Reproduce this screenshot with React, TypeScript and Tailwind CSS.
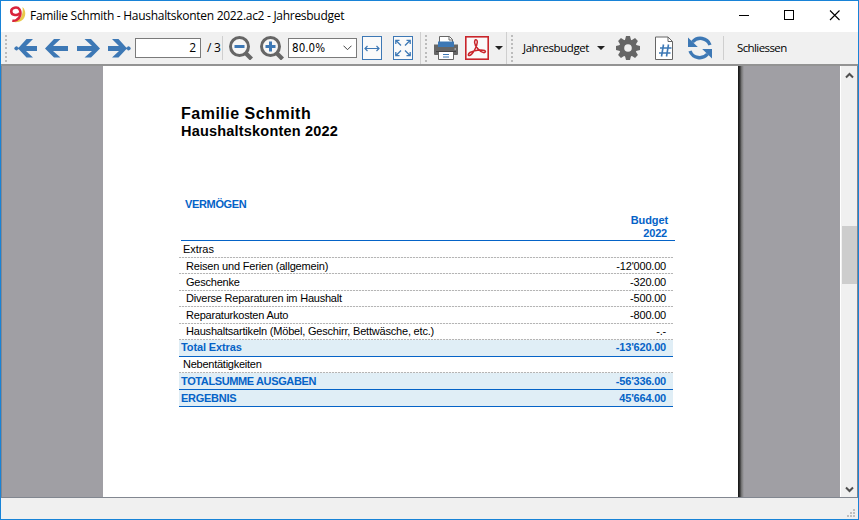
import React from "react";

const BLUE = "#3d78b5";
const GREY = "#666666";

function Grip({ className = "" }: { className?: string }) {
  return (
    <svg className={`shrink-0 ${className}`} width="2" height="27" viewBox="0 0 2 27" shapeRendering="crispEdges">
      {[0, 4, 8, 12, 17, 21, 25].map((y) => (
        <rect key={y} x="0" y={y} width="2" height="2" fill="#bcbcbc" />
      ))}
    </svg>
  );
}

function Caret({ className = "" }: { className?: string }) {
  return (
    <svg className={`shrink-0 ${className}`} width="8" height="4" viewBox="0 0 8 4">
      <path d="M0 0h8L4 4z" fill="#222" />
    </svg>
  );
}

function Arrow({ flip = false, dot = false, className = "" }: { flip?: boolean; dot?: boolean; className?: string }) {
  return (
    <svg className={`h-[20px] w-[24px] shrink-0 ${flip ? "-scale-x-100" : ""} ${className}`} viewBox="0 0 24 20">
      {dot ? (
        <path d="M12.500 1h6.500L12 8h11v5H12l7 6.500h-6.500L4.800 11.300H4a1.900 1.900 0 1 1 0-1.800h.8z" fill={BLUE} />
      ) : (
        <path d="M10 1h6.500L9 8h15v5H9l7.500 6.500H10L1 10.500z" fill={BLUE} />
      )}
    </svg>
  );
}

function Magnifier({ plus = false, className = "" }: { plus?: boolean; className?: string }) {
  return (
    <svg className={`shrink-0 ${className}`} width="24" height="24" viewBox="0 0 24 24">
      <circle cx="10.500" cy="10.500" r="9" fill="#f6f6f6" stroke={GREY} strokeWidth="3" />
      <path d="M16.500 17l6 6" stroke={GREY} strokeWidth="4.200" />
      <path d="M5.500 10.500h10" stroke={BLUE} strokeWidth="3" />
      {plus && <path d="M10.500 5.500v10" stroke={BLUE} strokeWidth="3" />}
    </svg>
  );
}

function FitWidth() {
  return (
    <svg className="ml-[5px] shrink-0" width="20" height="24" viewBox="0 0 20 24">
      <rect x=".5" y=".5" width="19" height="23" fill="#fafafa" stroke={BLUE} />
      <path d="M2.500 12.500h15M5.500 10L3 12.500 5.500 15M14.500 10l2.500 2.500-2.500 2.500" fill="none" stroke={BLUE} strokeWidth="1.200" />
    </svg>
  );
}

function FitPage() {
  return (
    <svg className="ml-[11px] shrink-0" width="20" height="24" viewBox="0 0 20 24">
      <rect x=".5" y=".5" width="19" height="23" fill="#fafafa" stroke={BLUE} />
      <path
        d="M3 4.500l5 5M17 4.500l-5 5M3 19.500l5-5M17 19.500l-5-5M2.800 8V4.300h3.700M13.500 4.300h3.700V8M2.800 16v3.700h3.700M17.200 16v3.700h-3.700"
        fill="none"
        stroke={BLUE}
        strokeWidth="1.300"
      />
    </svg>
  );
}

function Printer() {
  return (
    <svg className="ml-[7px] shrink-0" width="24" height="24" viewBox="0 0 24 24">
      <path d="M5.500 6V.5h10l3 3V6" fill="#fff" stroke={GREY} />
      <path d="M15 .5v3.500h3.500" fill="none" stroke={GREY} />
      <path d="M0 8.500h24V18a1 1 0 0 1-1 1H1a1 1 0 0 1-1-1z" fill={GREY} />
      <path d="M4 5.500h16V11H4z" fill={BLUE} />
      <path d="M4.500 15.500h15v8h-15z" fill="#fff" stroke={GREY} />
      <path d="M2 15.500h20" stroke="#444" />
      <path d="M9 18.500h6M9 21h6" stroke={BLUE} />
      <path d="M20.500 13h1.500" stroke="#ddd" />
    </svg>
  );
}

function Pdf() {
  return (
    <svg className="ml-[7px] shrink-0" width="24" height="24" viewBox="0 0 24 24">
      <rect x=".8" y=".8" width="22.400" height="22.400" fill="#fafafa" stroke="#c9252b" strokeWidth="1.600" />
      <path
        d="M10 4.300c1-1.300 2.500-.2 2.300 2C12 11 7.500 18.500 4.500 19.500c-1.800.3-1.500-1.800.5-3 4-2.300 11.500-3.300 14.500-2 1.800.8.700 2.400-1 2.100C14.500 15.500 9.800 10 9.600 6.500c0-1 .1-1.700.4-2.200z"
        fill="none"
        stroke="#c9252b"
        strokeWidth="1.500"
      />
    </svg>
  );
}

function Gear() {
  return (
    <svg className="ml-[11px] shrink-0" width="24" height="24" viewBox="0 0 24 24">
      {[0, 45, 90, 135].map((a) => (
        <path key={a} d="M10 0h4l1 4v16l-1 4h-4l-1-4V4z" fill={GREY} transform={`rotate(${a} 12 12)`} />
      ))}
      <circle cx="12" cy="12" r="8.800" fill={GREY} />
      <circle cx="12" cy="12" r="3.800" fill="#f0f0f0" />
    </svg>
  );
}

function HashPage() {
  return (
    <svg className="ml-[15px] shrink-0" width="18" height="24" viewBox="0 0 18 24">
      <path d="M.5 1h12.500l4.500 4.500v18H.5z" fill="#fff" stroke={GREY} />
      <path d="M13 1v4.500h4.500" fill="none" stroke={GREY} />
      <path d="M8.500 8.500l-2 12M13.500 8.500l-2 12M5 12h11.500M4 17h11.500" stroke={BLUE} strokeWidth="1.600" />
    </svg>
  );
}

function Refresh() {
  return (
    <svg className="ml-[15px] shrink-0" width="24" height="24" viewBox="0 0 24 24">
      <path d="M22 9A10.300 10.300 0 0 0 4.500 6M2 15a10.300 10.300 0 0 0 17.500 3" fill="none" stroke={BLUE} strokeWidth="3.400" />
      <path d="M0 1.500V11h9.800zM24 22.500V13h-9.800z" fill={BLUE} />
    </svg>
  );
}

function Logo() {
  return (
    <svg className="mt-[5px] shrink-0" width="17" height="17" viewBox="0 0 17 17">
      <path d="M13.500 1c4 3.500 3.600 10.500-.8 13.500-2.700 1.800-6.500 2-9.200 1.200 4.500-.4 7.700-2.200 9-5.700 1-3 1.500-5.500 1-9z" fill="#e9c94b" />
      <path d="M10.500 7C9 10 2.500 10 2.200 5.700 2 1.200 8.500.4 10.500 3.400c2 3.500.8 8.800-3 10.600-1.300.7-2.700.9-4.200.7" fill="none" stroke="#d9233b" strokeWidth="2.500" />
    </svg>
  );
}

function TitleBar() {
  return (
    <header className="flex h-[31px] shrink-0 bg-white pl-[8px]">
      <Logo />
      <span className="ml-[4px] mt-[5px] w-[680px] whitespace-nowrap font-['Open_Sans','Noto_Sans',sans-serif] text-[12px] leading-[19px] tracking-[-0.29px] text-black">
        Familie Schmith - Haushaltskonten 2022.ac2 - Jahresbudget
      </span>
      <svg className="ml-[29px] mt-[8px] shrink-0" width="102" height="14" viewBox="0 0 102 14" fill="none" stroke="#000">
        <path d="M0 6.500h10" shapeRendering="crispEdges" />
        <rect x="45.500" y="1.500" width="9" height="9" shapeRendering="crispEdges" />
        <path d="M91 1.500l9.500 9.500M100.500 1.500L91 11" strokeWidth="1.100" />
      </svg>
    </header>
  );
}

function Divider({ className = "h-[24px]" }: { className?: string }) {
  return <div className={`w-px shrink-0 bg-[#cfcfcf] ${className}`} />;
}

function Toolbar() {
  return (
    <div className="flex h-[34px] shrink-0 items-center border-b-2 border-[#939393] bg-[#f0f0f0] pl-[4px] font-['Open_Sans','Noto_Sans',sans-serif] text-[11.5px] text-black">
      <Grip />
      <Arrow dot className="ml-[7px]" />
      <Arrow className="ml-[6px]" />
      <Arrow flip className="ml-[9px]" />
      <Arrow flip dot className="ml-[6px]" />
      <div className="ml-[4px] flex h-[20px] w-[66px] shrink-0 items-center justify-end border border-[#7a7a7a] bg-white pr-[4px] text-[12px] leading-[18px]">2</div>
      <span className="ml-[6px] w-[14px] shrink-0 whitespace-nowrap text-[12px] tracking-[-0.2px]">/ 3</span>
      <Divider className="ml-px h-[24px]" />
      <Magnifier className="ml-[6px]" />
      <Magnifier plus className="ml-[7px]" />
      <div className="ml-[4px] flex h-[20px] w-[69px] shrink-0 items-center border border-[#7a7a7a] bg-white pl-[3px]">
        <span className="w-[36px] whitespace-nowrap pt-px font-['DejaVu_Sans_Condensed','DejaVu_Sans',sans-serif] text-[11.5px] tracking-[0.05px]">80.0%</span>
        <svg className="ml-[15px]" width="9" height="6" viewBox="0 0 9 6">
          <path d="M.5.7l4 4 4-4" fill="none" stroke="#444" />
        </svg>
      </div>
      <FitWidth />
      <FitPage />
      <Divider className="ml-[7px] h-[32px]" />
      <Grip className="ml-[4px]" />
      <Printer />
      <Pdf />
      <Caret className="ml-[6px]" />
      <Divider className="ml-[3px] h-[32px]" />
      <Grip className="ml-[4px]" />
      <span className="ml-[10px] w-[67px] shrink-0 whitespace-nowrap text-[11.5px] tracking-[-0.43px]">Jahresbudget</span>
      <Caret className="ml-[7px]" />
      <Gear />
      <HashPage />
      <Refresh />
      <Divider className="ml-[11px] h-[24px]" />
      <span className="ml-[13px] whitespace-nowrap tracking-[-0.6px]">Schliessen</span>
    </div>
  );
}

type RowProps = {
  label: string;
  value?: string;
  kind?: "group" | "item" | "total";
  size?: string;
  spacing?: string;
};

const rows: RowProps[] = [
  { label: "Extras", kind: "group", spacing: "tracking-[-0.05px]" },
  { label: "Reisen und Ferien (allgemein)", value: "-12'000.00", size: "h-[15px] leading-[17px]", spacing: "tracking-[-0.18px]" },
  { label: "Geschenke", value: "-320.00", spacing: "tracking-[-0.22px]" },
  { label: "Diverse Reparaturen im Haushalt", value: "-500.00", size: "h-[15px] leading-[15px]", spacing: "tracking-[-0.22px]" },
  { label: "Reparaturkosten Auto", value: "-800.00", spacing: "tracking-[-0.21px]" },
  { label: "Haushaltsartikeln (Möbel, Geschirr, Bettwäsche, etc.)", value: "-.-", size: "h-[15px] leading-[15px]", spacing: "tracking-[-0.2px]" },
  { label: "Total Extras", value: "-13'620.00", kind: "total", size: "h-[16px] leading-[14px]", spacing: "tracking-[-0.12px]" },
  { label: "Nebentätigkeiten", kind: "group", size: "h-[15px] leading-[15px]", spacing: "tracking-[-0.25px]" },
  { label: "TOTALSUMME AUSGABEN", value: "-56'336.00", kind: "total", spacing: "tracking-[-0.38px]" },
  { label: "ERGEBNIS", value: "45'664.00", kind: "total", spacing: "tracking-[-0.27px]" },
];

function Row({ label, value, kind = "item", size = "h-[16px] leading-[16px]", spacing = "" }: RowProps) {
  const total = kind === "total";
  const indent = total ? "pl-[2px]" : kind === "group" ? "pl-[4px]" : "pl-[7px]";
  return (
    <div className={`w-[494px] ${total ? "font-bold text-[#0563c7]" : "text-black"}`}>
      <div className={`flex justify-between whitespace-nowrap pr-[7px] text-[11px] ${size} ${indent} ${total ? "bg-[#e0eef6]" : ""}`}>
        <span className={spacing}>{label}</span>
        <span className="tracking-[-0.2px]">{value}</span>
      </div>
      <div className={`h-px ${total ? "bg-[#0563c7]" : "bg-[repeating-linear-gradient(90deg,#b5b5b5_0_2px,#f4f4f4_2px_3px)]"}`} />
    </div>
  );
}

function Report() {
  return (
    <main className="ml-[101px] flex w-[635px] shrink-0 flex-col bg-white pl-[76px] pt-[38px] font-['Liberation_Sans',Arial,sans-serif]">
      <h1 className="ml-[2px] whitespace-nowrap text-[16px] font-bold leading-[20px] tracking-[0.5px]">Familie Schmith</h1>
      <h2 className="ml-[2px] whitespace-nowrap text-[14.5px] font-bold leading-[15px] tracking-[0.2px]">Haushaltskonten 2022</h2>
      <h3 className="ml-[6px] mt-[58px] text-[11px] font-bold leading-[14px] tracking-[-0.35px] text-[#0563c7]">VERMÖGEN</h3>
      <div className="ml-[2px] mt-[3px] h-[27px] w-[494px] border-b border-[#0563c7] pr-[7px] text-right text-[11px] font-bold leading-[13px] text-[#0563c7]">
        <div className="tracking-[-0.1px]">Budget</div>
        <div className="pr-px tracking-[-0.2px]">2022</div>
      </div>
      {rows.map((row) => (
        <Row key={row.label} {...row} />
      ))}
    </main>
  );
}

function ScrollBar() {
  return (
    <div className="ml-auto flex w-[17px] shrink-0 flex-col items-center border-l border-white bg-[#f0f0f0]">
      <svg className="mt-[6px]" width="9" height="7" viewBox="0 0 9 7">
        <path d="M1 5.500L4.500 2 8 5.500" fill="none" stroke="#505050" strokeWidth="2" />
      </svg>
      <div className="mt-[147px] h-[58px] w-[15px] bg-[#cdcdcd]" />
      <svg className="mb-[4px] mt-auto" width="9" height="7" viewBox="0 0 9 7">
        <path d="M1 1.500L4.500 5 8 1.500" fill="none" stroke="#505050" strokeWidth="2" />
      </svg>
    </div>
  );
}

export default function App() {
  return (
    <div className="flex h-[520px] w-[859px] flex-col overflow-hidden border border-[#1883d7] bg-[#f0f0f0]">
      <TitleBar />
      <Toolbar />
      <div className="flex h-[432px] shrink-0 border-x border-b border-[#828790] bg-[#a09fa4]">
        <Report />
        <div className="w-[6px] shrink-0 bg-[linear-gradient(90deg,#111,#333_30%,#777_60%,#a09fa4)]" />
        <ScrollBar />
      </div>
      <footer className="flex flex-1 items-end justify-end pb-[2px] pr-[3px]">
        <svg width="8" height="8" viewBox="0 0 8 8" fill="#bfbfbf" shapeRendering="crispEdges">
          <path d="M6 0h2v2H6zM3 3h2v2H3zM6 3h2v2H6zM0 6h2v2H0zM3 6h2v2H3zM6 6h2v2H6z" />
        </svg>
      </footer>
    </div>
  );
}
